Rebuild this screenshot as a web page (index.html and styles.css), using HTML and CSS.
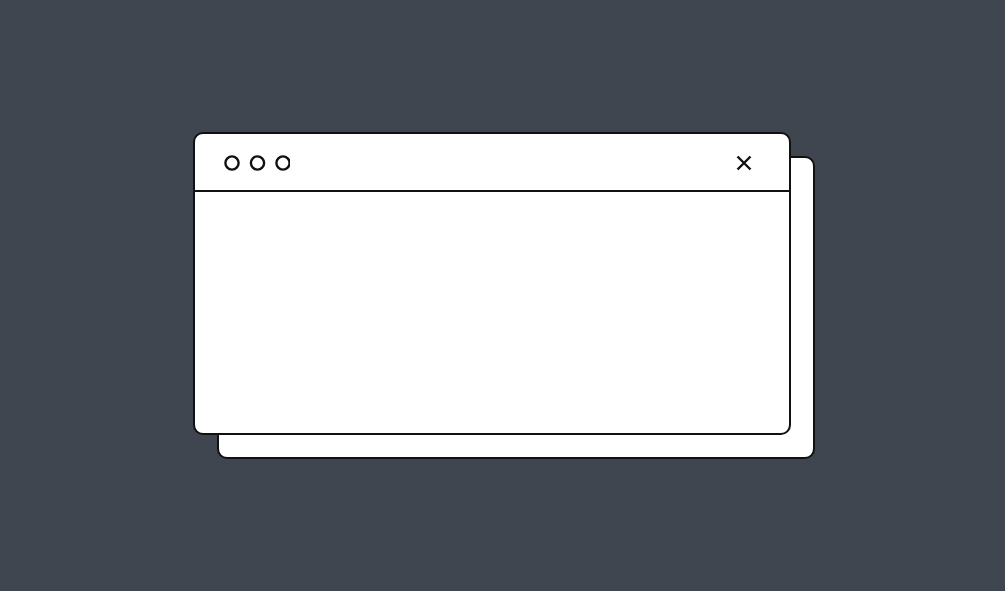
FILE: index.html
```html
<!DOCTYPE html>
<html lang="en">
<head>
<meta charset="utf-8">
<title>Windows</title>
<link rel="stylesheet" href="styles.css">
</head>
<body>
<div class="stage">
  <div class="window back"></div>
  <div class="window front">
    <div class="titlebar">
      <svg class="dots" width="66" height="16" viewBox="0 0 66 16" aria-hidden="true">
        <circle cx="8" cy="8" r="6.6" stroke="#111" stroke-width="2.4" fill="none"/>
        <circle cx="33.5" cy="8" r="6.6" stroke="#111" stroke-width="2.4" fill="none"/>
        <circle cx="59" cy="8" r="6.6" stroke="#111" stroke-width="2.4" fill="none"/>
      </svg>
      <svg class="close" width="16" height="16" viewBox="0 0 16 16" aria-label="Close">
        <path d="M1.5 1.5 L14.5 14.5 M14.5 1.5 L1.5 14.5" stroke="#111" stroke-width="2.4" stroke-linecap="butt" fill="none"/>
      </svg>
    </div>
    <div class="content"></div>
  </div>
</div>
</body>
</html>
```

FILE: styles.css
```css
html, body {
  margin: 0;
  padding: 0;
  height: 100%;
}
body {
  background: #3f464f;
  display: flex;
  align-items: center;
  justify-content: center;
  font-family: "Liberation Sans", Arial, sans-serif;
}
.stage {
  display: grid;
  margin-left: 4px;
  margin-right: 1px;
}
.window {
  grid-area: 1 / 1;
  width: 598px;
  height: 303px;
  box-sizing: border-box;
  background: #fff;
  border: 2px solid #111;
  border-radius: 10px;
}
.back {
  margin-left: 24px;
  margin-top: 24px;
}
.front {
  margin-right: 24px;
  margin-bottom: 24px;
  display: flex;
  flex-direction: column;
  overflow: hidden;
}
.titlebar {
  height: 56px;
  border-bottom: 2px solid #111;
  display: flex;
  align-items: center;
  justify-content: space-between;
  padding: 0 37px 0 29px;
  flex: none;
}
.dots {
  display: block;
  margin-top: 2px;
}
.close {
  display: block;
  margin-top: 2px;
}
.content {
  flex: 1;
}
```
